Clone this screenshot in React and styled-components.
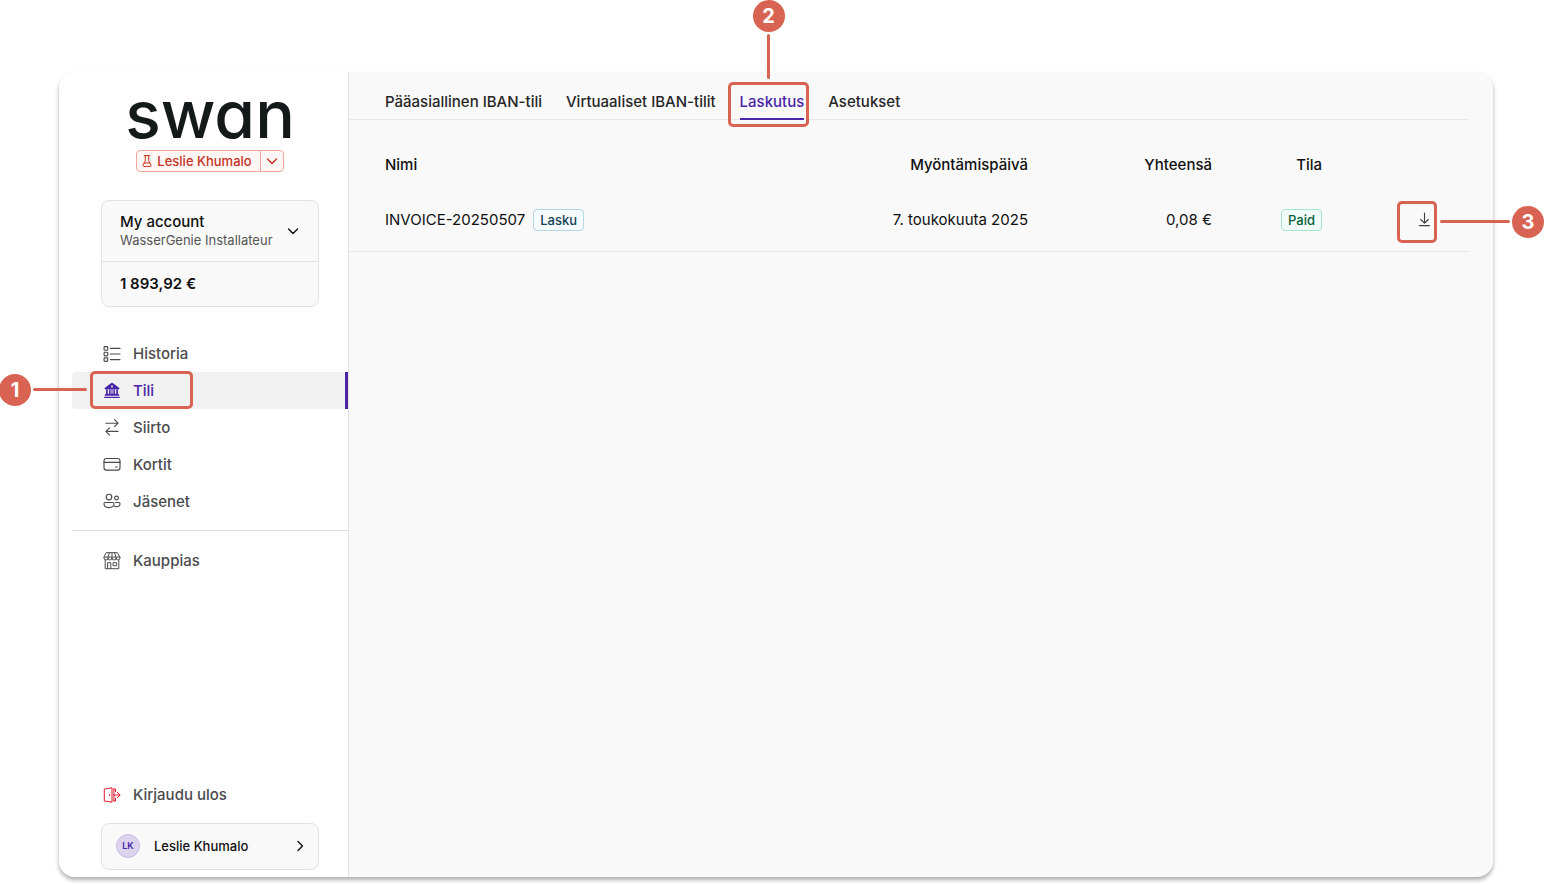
import React from "react";
import styled, { createGlobalStyle, css } from "styled-components";

const GlobalStyle = createGlobalStyle`
  *, *::before, *::after { box-sizing: border-box; }
  body {
    margin: 0;
    background: #fff;
    color: #101010;
    font-family: Inter, "Liberation Sans", sans-serif;
    font-size: 15px;
    line-height: 20px;
  }
  button { font: inherit; color: inherit; background: none; border: 0; padding: 0; margin: 0; cursor: pointer; }
  a { color: inherit; text-decoration: none; }
`;

const accent = "#d96352";
const purple = "#4a25a8";
const line = "#e4e4e4";

const Page = styled.div`
  display: flex;
  min-height: 100vh;
  padding: 72px 51px 8px 59px;
`;

const Window = styled.div`
  flex: 1;
  display: flex;
  min-width: 0;
  border-radius: 16px;
  background: #f9f9f9;
  box-shadow: 0 3px 4px rgba(0, 0, 0, 0.32);
`;

const Sidebar = styled.aside`
  flex: none;
  display: flex;
  flex-direction: column;
  width: 290px;
  padding: 16px 0 7px 13px;
  border-right: 1px solid ${line};
  border-radius: 16px 0 0 16px;
  background: #fff;
`;

const Brand = styled.div`
  display: flex;
  flex-direction: column;
  align-items: center;
`;

const Wordmark = styled.div`
  margin-bottom: 10px;
  color: #141a1a;
  font-size: 66px;
  line-height: 52px;
  font-weight: 500;
  font-feature-settings: "cv11" 1;
`;

const EnvSwitch = styled.div`
  display: flex;
  height: 22px;
  color: #c8321f;
  border: 1px solid #f0a79e;
  border-radius: 4px;
  background: #fdf6f5;
  font-size: 13px;
  font-weight: 500;
`;

const EnvButton = styled.button`
  display: flex;
  align-items: center;
  gap: 5px;
  padding: 0 8px 1px 5px;
`;

const EnvMore = styled.button`
  display: grid;
  place-items: center;
  width: 23px;
  border-left: 1px solid #f0a79e;
`;

const Panel = styled.div`
  margin: 0 29px;
  border: 1px solid #e2e2e2;
  border-radius: 8px;
  background: #f9f9f9;
`;

const AccountPanel = styled(Panel)`
  margin-top: 28px;
`;

const AccountButton = styled.button`
  display: flex;
  align-items: center;
  justify-content: space-between;
  width: 100%;
  height: 60px;
  padding: 0 19px 0 18px;
  text-align: left;
`;

const AccountName = styled.div`
  font-weight: 500;
  line-height: 20px;
`;

const AccountOwner = styled.div`
  padding-bottom: 2px;
  color: #555;
  font-size: 13px;
  line-height: 17px;
`;

const Balance = styled.div`
  padding: 12px 18px;
  border-top: 1px solid #e2e2e2;
  font-weight: 600;
`;

const Nav = styled.nav`
  margin-top: 28px;
`;

const NavLink = styled.a`
  position: relative;
  display: flex;
  align-items: center;
  gap: 12px;
  height: 37px;
  padding-left: 31px;
  color: #4b4b4d;
  font-weight: 500;
  ${({ $active }) => $active && css`
    color: ${purple};
    background: #f1f1f1;
    border-right: 3px solid ${purple};
    border-radius: 4px 0 0 4px;
  `}
`;

const NavRule = styled.hr`
  width: 100%;
  height: 1px;
  margin: 10px 0 11px;
  border: 0;
  background: #dedede;
`;

const SideFooter = styled.div`
  margin-top: auto;
`;

const UserPanel = styled(Panel)`
  margin-top: 10px;
`;

const UserButton = styled.button`
  display: flex;
  align-items: center;
  width: 100%;
  height: 45px;
  padding: 0 12px 1px 14px;
  font-size: 13px;
  font-weight: 500;
`;

const Avatar = styled.span`
  display: grid;
  place-items: center;
  width: 24px;
  height: 24px;
  margin-right: 14px;
  border: 1px solid #c9bce6;
  border-radius: 50%;
  color: ${purple};
  background: #dcd3ed;
  font-size: 9px;
  font-weight: 600;
`;

const UserName = styled.span`
  flex: 1;
  text-align: left;
`;

const Main = styled.main`
  flex: 1;
  min-width: 0;
  padding-right: 24px;
`;

const Tabs = styled.nav`
  display: flex;
  gap: 24px;
  height: 48px;
  padding-left: 36px;
  border-bottom: 1px solid #e8e8e8;
`;

const Tab = styled.a`
  position: relative;
  height: 48px;
  padding-top: 20px;
  color: #262626;
  font-weight: 500;
  white-space: nowrap;
  ${({ $active }) => $active && css`
    color: ${purple};
    border-bottom: 2px solid ${purple};
  `}
`;

const Table = styled.table`
  width: 100%;
  margin-top: 22px;
  table-layout: fixed;
  border-collapse: separate;
  border-spacing: 0;
`;

const Column = styled.col`
  width: ${({ $width }) => $width};
`;

const HeadCell = styled.th`
  height: 46px;
  padding: 0 0 0 ${({ $first }) => ($first ? "36px" : "0")};
  text-align: ${({ $first }) => ($first ? "left" : "right")};
  font-weight: 500;
`;

const Cell = styled.td`
  height: 64px;
  padding: 0 ${({ $last }) => ($last ? "37px" : "0")} 0 ${({ $first }) => ($first ? "36px" : "0")};
  border-bottom: 1px solid #e4e4e4;
  text-align: ${({ $first }) => ($first ? "left" : "right")};
`;

const InvoiceName = styled.div`
  display: flex;
  align-items: center;
  gap: 8px;
`;

const Tag = styled.span`
  display: inline-block;
  padding: 0 6px;
  border: 1px solid ${({ $tone }) => ($tone === "green" ? "#a3e8cc" : "#b4d5e2")};
  border-radius: 4px;
  color: ${({ $tone }) => ($tone === "green" ? "#065f38" : "#134155")};
  background: ${({ $tone }) => ($tone === "green" ? "#f2fcf8" : "#f5fafc")};
  font-size: 13px;
  line-height: 20px;
  font-weight: 500;
`;

const DownloadButton = styled.button`
  position: relative;
  display: inline-grid;
  place-items: center;
  width: 16px;
  height: 16px;
  vertical-align: middle;
  color: #3c3c3c;
`;

const Marker = styled.span`
  position: absolute;
  border: 3px solid ${accent};
  border-radius: 5px;
  pointer-events: none;
  ${({ $at }) => $at === "nav" && css`inset: -1px auto 0 18px; width: 103px;`}
  ${({ $at }) => $at === "tab" && css`inset: 10px -5px -9px -12px;`}
  ${({ $at }) => $at === "action" && css`top: -11px; right: -5px; width: 40px; height: 42px;`}
`;

const Leader = styled.span`
  position: absolute;
  border-radius: 2px;
  background: ${accent};
  ${({ $at }) => $at === "nav" && css`top: 14px; right: 100%; width: 54px; height: 3px; margin-right: 6px;`}
  ${({ $at }) => $at === "tab" && css`bottom: 100%; left: 36px; width: 3px; height: 45px; margin-bottom: 6px;`}
  ${({ $at }) => $at === "action" && css`top: 16px; left: 100%; width: 70px; height: 3px; margin-left: 6px;`}
`;

const Badge = styled.span`
  position: absolute;
  display: grid;
  place-items: center;
  width: 32px;
  height: 32px;
  border-radius: 50%;
  color: #fff;
  background: ${accent};
  font-size: 20px;
  line-height: 24px;
  font-weight: 700;
  ${({ $at }) => $at === "nav" && css`top: 0; right: 100%; margin-right: 62px;`}
  ${({ $at }) => $at === "tab" && css`bottom: 100%; left: 22px; margin-bottom: 53px;`}
  ${({ $at }) => $at === "action" && css`top: 2px; left: 100%; margin-left: 78px;`}
`;

function Callout({ at, number }) {
  return (
    <Marker $at={at}>
      <Leader $at={at} />
      <Badge $at={at}>{number}</Badge>
    </Marker>
  );
}

const Svg = styled.svg`
  display: block;
  flex: none;
  fill: none;
  stroke: ${({ $color }) => $color || "currentColor"};
  stroke-width: ${({ $weight }) => $weight || 1.2};
  stroke-linecap: round;
  stroke-linejoin: round;
`;

const icons = {
  list: (
    <>
      <rect x="1.1" y="1.6" width="3.6" height="3.6" rx=".8" />
      <rect x="1.1" y="7.2" width="3.6" height="3.6" rx=".8" />
      <rect x="1.1" y="12.8" width="3.6" height="3.6" rx=".8" />
      <path d="M7.3 3.4H17M7.3 9H17M7.3 14.6H17" />
    </>
  ),
  bank: (
    <g fill="currentColor" stroke="none">
      <path fillRule="evenodd" d="M8.3 1a1.2 1.2 0 0 1 1.4 0l6.3 4.7c.8.6.4 1.6-.5 1.6H2.5c-.9 0-1.3-1-.5-1.6zM9 3.6a1 1 0 1 0 0 2 1 1 0 0 0 0-2z" />
      <path d="M3 7.3h1.7v5H3zM6.1 7.3h1.5v5H6.1zM10.4 7.3h1.5v5h-1.5zM13.3 7.3H15v5h-1.7zM8.5 7.3h1v5h-1zM3.4 11.8h11.2c1 0 1.7.7 1.7 1.7v.3H1.7v-.3c0-1 .7-1.7 1.7-1.7zM1.2 14.7h15.6v1.4H1.2z" />
    </g>
  ),
  transfer: <path d="M2.9 4.2h12.2M11.5.7l3.6 3.5-3.6 3.5M15.1 12.3H2.9M6.5 8.9l-3.6 3.4 3.6 3.5" />,
  card: (
    <>
      <rect x="1" y="2.5" width="16" height="11.6" rx="2.4" />
      <path d="M1 6.4h16M12.4 11h1.8" />
    </>
  ),
  people: (
    <>
      <circle cx="6" cy="4" r="2.8" />
      <circle cx="13.5" cy="5" r="1.9" />
      <path d="M2.3 9.5h7.4c.8 0 1.3.5 1.3 1.3 0 2.2-2 3.8-5 3.8s-5-1.6-5-3.8c0-.8.5-1.3 1.3-1.3zM12.6 9.5h3.1c.8 0 1.3.5 1.3 1.2 0 1.7-1.4 2.9-3.6 2.9-.6 0-1.1-.1-1.6-.2" />
    </>
  ),
  shop: (
    <path d="M3.6.7h10.8L17 5.3V6a2 2 0 0 1-4 0 2 2 0 0 1-4 0 2 2 0 0 1-4 0 2 2 0 0 1-4 0v-.7zM1.2 5.1h15.6M6.4.7 5 5.2V6M11.6.7 13 5.2V6M9 .7V6M2.2 8.3v8.4h13.6V8.3M4.6 16.7v-6h3.2v6M10.4 10.7h3.2v3h-3.2z" />
  ),
  exit: (
    <>
      <path d="M8.6 1.9 1.3 3v12l7.3 1.1zM10.9 3v12M10.9 3h1.6v2.6M10.9 15h1.6v-2.6M10.9 9H17M14.4 6.4 17 9l-2.6 2.6" />
      <circle cx="6.4" cy="9" r=".3" />
    </>
  ),
};

function NavIcon({ name, color }) {
  const weight = name === "shop" || name === "exit" ? 1 : 1.15;
  return (
    <Svg width="18" height="18" viewBox="0 0 18 18" $color={color} $weight={weight} aria-hidden="true">
      {icons[name]}
    </Svg>
  );
}

function Chevron({ right }) {
  return (
    <Svg width="12" height="12" viewBox="0 0 12 12" $weight={1.4} aria-hidden="true">
      <path d={right ? "M4 1.5 8.5 6 4 10.5" : "M1.5 4 6 8.5 10.5 4"} />
    </Svg>
  );
}

function Flask() {
  return (
    <Svg width="10" height="12" viewBox="0 0 10 12" $weight={1} aria-hidden="true">
      <path d="M2.2.6h5.6M3.3.6v5.2L1 10.1c-.3.7 0 1.3.7 1.3h6.6c.7 0 1-.6.7-1.3L6.7 5.8V.6M2.3 8h5.4" />
    </Svg>
  );
}

const navItems = [
  { label: "Historia", icon: "list" },
  { label: "Tili", icon: "bank", active: true },
  { label: "Siirto", icon: "transfer" },
  { label: "Kortit", icon: "card" },
  { label: "Jäsenet", icon: "people" },
];

const tabs = ["Pääasiallinen IBAN-tili", "Virtuaaliset IBAN-tilit", "Laskutus", "Asetukset"];

export default function App() {
  return (
    <>
      <GlobalStyle />
      <Page>
        <Window>
          <Sidebar>
            <Brand>
              <Wordmark>swan</Wordmark>
              <EnvSwitch>
                <EnvButton type="button">
                  <Flask />
                  Leslie Khumalo
                </EnvButton>
                <EnvMore type="button" aria-label="Leslie Khumalo">
                  <Chevron />
                </EnvMore>
              </EnvSwitch>
            </Brand>

            <AccountPanel>
              <AccountButton type="button">
                <div>
                  <AccountName>My account</AccountName>
                  <AccountOwner>WasserGenie Installateur</AccountOwner>
                </div>
                <Chevron />
              </AccountButton>
              <Balance>1 893,92 €</Balance>
            </AccountPanel>

            <Nav>
              {navItems.map((item) => (
                <NavLink key={item.label} href="#" $active={item.active}>
                  <NavIcon name={item.icon} />
                  {item.label}
                  {item.active && <Callout at="nav" number="1" />}
                </NavLink>
              ))}
              <NavRule />
              <NavLink href="#">
                <NavIcon name="shop" />
                Kauppias
              </NavLink>
            </Nav>

            <SideFooter>
              <NavLink href="#">
                <NavIcon name="exit" color="#e0182d" />
                Kirjaudu ulos
              </NavLink>
              <UserPanel>
                <UserButton type="button">
                  <Avatar>LK</Avatar>
                  <UserName>Leslie Khumalo</UserName>
                  <Chevron right />
                </UserButton>
              </UserPanel>
            </SideFooter>
          </Sidebar>

          <Main>
            <Tabs>
              {tabs.map((label) => (
                <Tab key={label} href="#" $active={label === "Laskutus"}>
                  {label}
                  {label === "Laskutus" && <Callout at="tab" number="2" />}
                </Tab>
              ))}
            </Tabs>

            <Table>
              <colgroup>
                <Column $width="auto" />
                <Column $width="184px" />
                <Column $width="184px" />
                <Column $width="110px" />
                <Column $width="147px" />
              </colgroup>
              <thead>
                <tr>
                  <HeadCell $first>Nimi</HeadCell>
                  <HeadCell>Myöntämispäivä</HeadCell>
                  <HeadCell>Yhteensä</HeadCell>
                  <HeadCell>Tila</HeadCell>
                  <HeadCell as="td" />
                </tr>
              </thead>
              <tbody>
                <tr>
                  <Cell $first>
                    <InvoiceName>
                      INVOICE-20250507
                      <Tag>Lasku</Tag>
                    </InvoiceName>
                  </Cell>
                  <Cell>7. toukokuuta 2025</Cell>
                  <Cell>0,08 €</Cell>
                  <Cell>
                    <Tag $tone="green">Paid</Tag>
                  </Cell>
                  <Cell $last>
                    <DownloadButton type="button" aria-label="Download">
                      <Svg width="16" height="16" viewBox="0 0 16 16" $weight={1.1} aria-hidden="true">
                        <path d="M8.5 1v10M4.7 7.5l3.8 3.7 3.8-3.7M3.5 13.6h10" />
                      </Svg>
                      <Callout at="action" number="3" />
                    </DownloadButton>
                  </Cell>
                </tr>
              </tbody>
            </Table>
          </Main>
        </Window>
      </Page>
    </>
  );
}
